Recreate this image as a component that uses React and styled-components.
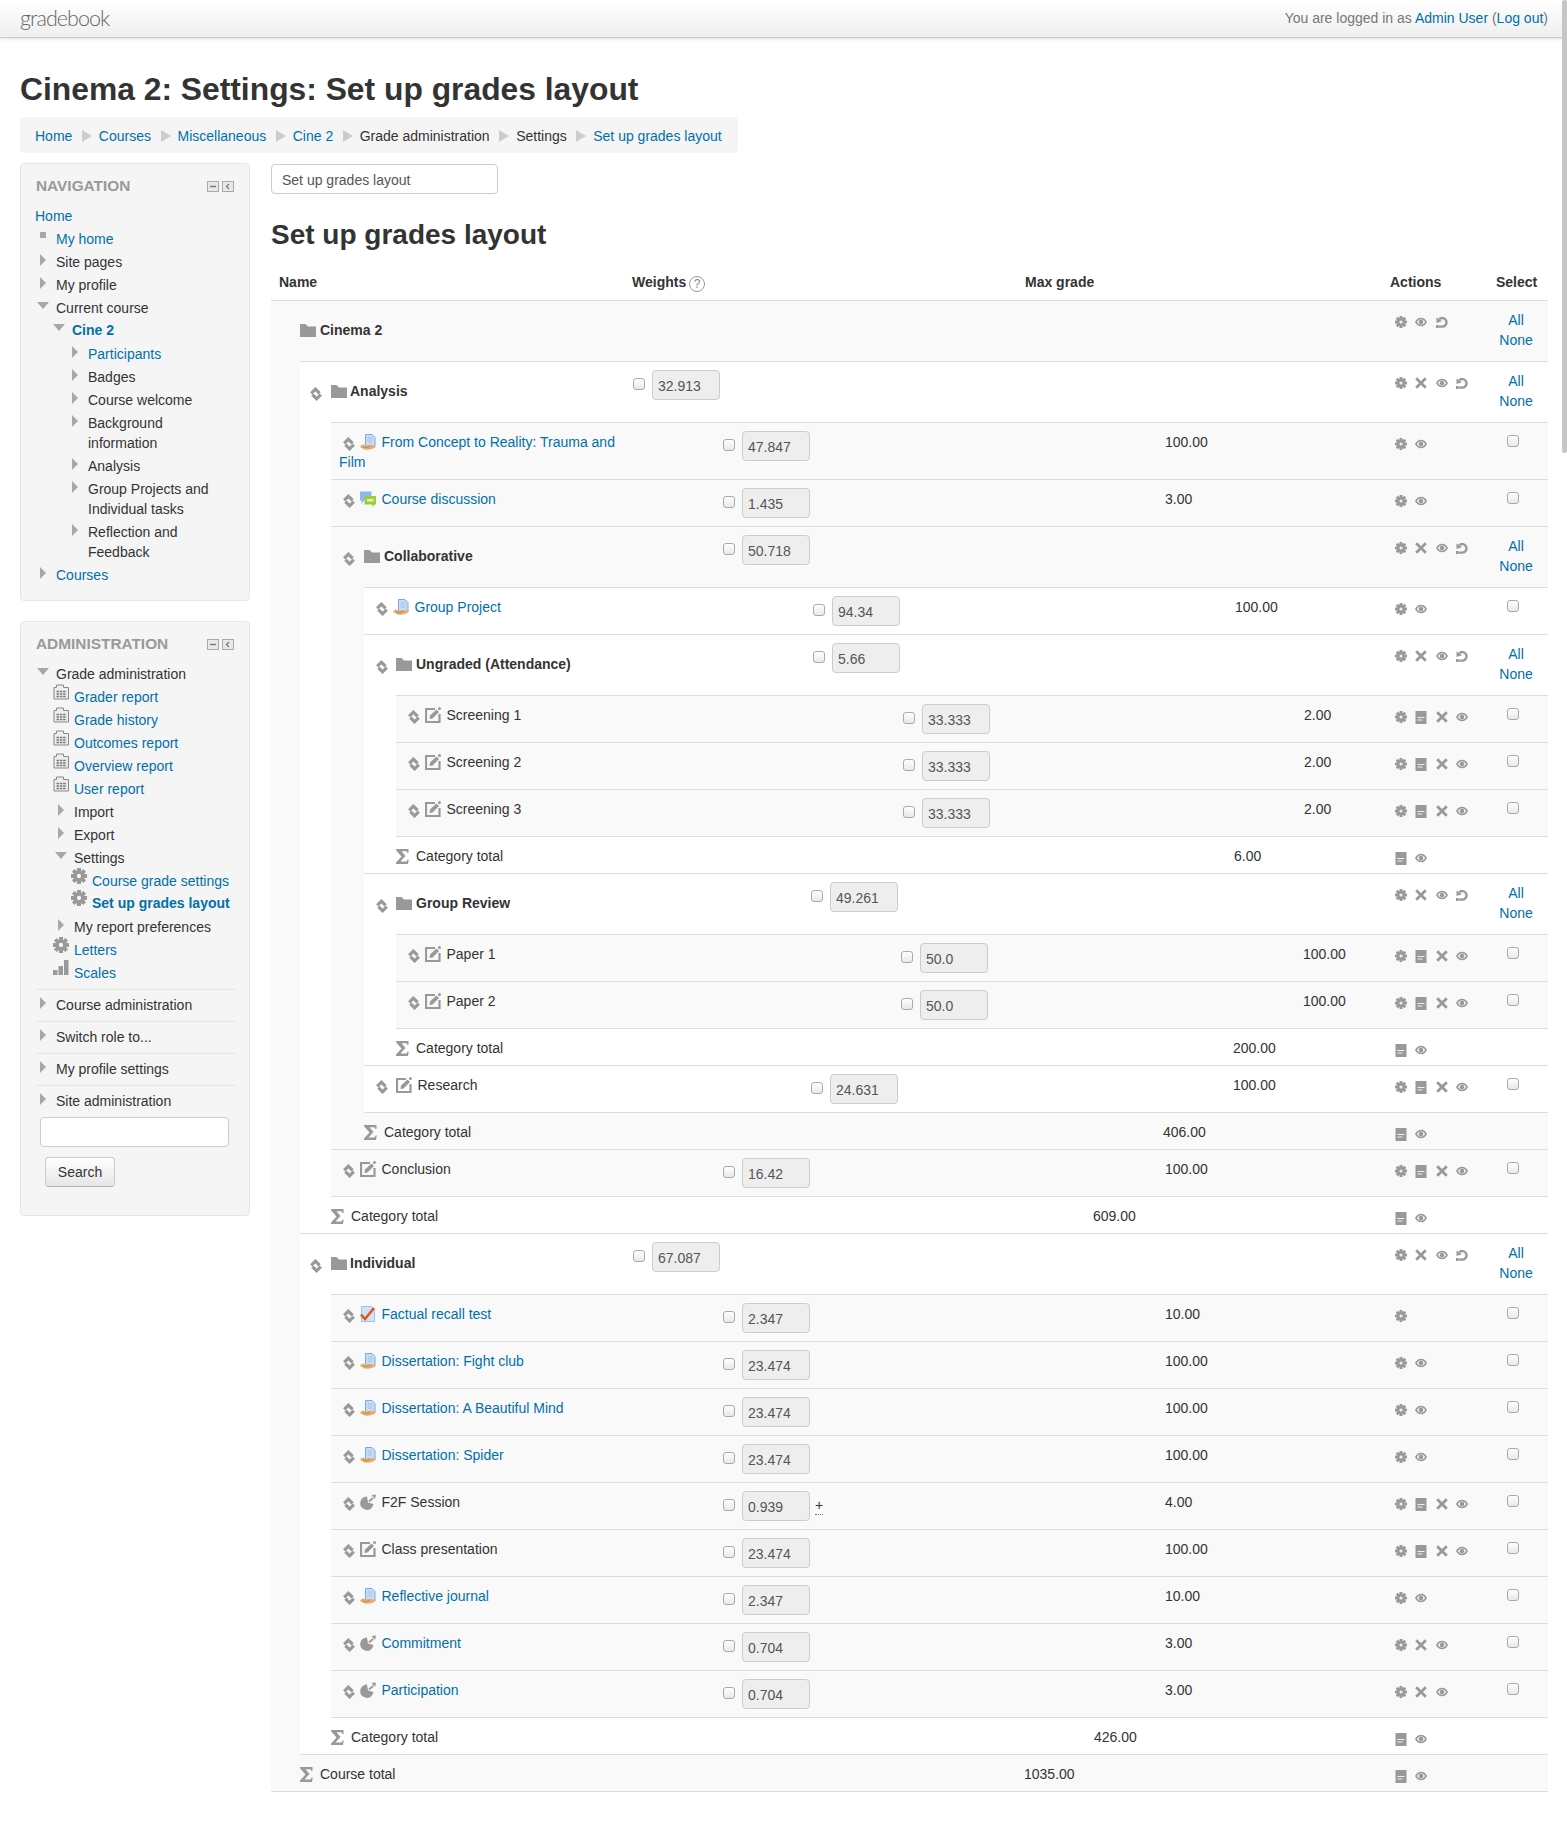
import React from "react";
import styled, { createGlobalStyle } from "styled-components";

const LINK = "#0070a8";
const ICON = "#999";
const LINE = "#ddd";

// left edge of a table row for each nesting level
const LEVEL_X = [271, 300, 331, 364, 396];
const ACTIONS_X = 1395;

const GlobalStyle = createGlobalStyle`
  html, body {
    margin: 0;
    padding: 0;
    background: #fff;
    overflow: hidden;
  }
  body {
    font-family: "Liberation Sans", Arial, sans-serif;
    font-size: 14px;
    line-height: 20px;
    color: #333;
  }
`;

const Page = styled.div`
  position: relative;
  width: 1567px;
  height: 1830px;
`;

const ScrollThumb = styled.div`
  position: absolute;
  top: 0;
  right: 0;
  width: 5px;
  height: 453px;
  border-radius: 3px;
  background: #c6c6c6;
`;

const TopBar = styled.header`
  display: flex;
  justify-content: space-between;
  align-items: center;
  box-sizing: border-box;
  height: 38px;
  padding: 0 19px 2px 20px;
  background: linear-gradient(#fff, #efefef);
  border-bottom: 1px solid #ccc;
  box-shadow: 0 1px 3px rgba(0, 0, 0, 0.12);
`;

const Logo = styled.span`
  font-family: Lato, "Liberation Sans", sans-serif;
  font-weight: 300;
  font-size: 21.5px;
  letter-spacing: -0.95px;
  color: #666;
`;

const LoginInfo = styled.div`
  color: #777;
`;

const A = styled.a`
  color: ${LINK};
  text-decoration: none;
  font-weight: ${(p) => (p.$bold ? 700 : 400)};
`;

const Content = styled.div`
  padding: 31px 19px 0 20px;
`;

const PageTitle = styled.h1`
  margin: 0 0 8px;
  font-size: 31.8px;
  line-height: 40px;
  font-weight: 700;
  color: #333;
`;

const Crumbs = styled.nav`
  display: flex;
  align-items: center;
  box-sizing: border-box;
  width: 718px;
  height: 36px;
  padding: 1px 15px 0;
  white-space: nowrap;
  background: #f5f5f5;
  border-radius: 4px;
`;

const CrumbArrow = styled.span`
  flex: none;
  width: 0;
  height: 0;
  margin: 0 6.75px 0 9.75px;
  border-top: 6px solid transparent;
  border-bottom: 6px solid transparent;
  border-left: 10px solid #ccc;
`;

const Columns = styled.div`
  display: grid;
  grid-template-columns: 230px 1277px;
  column-gap: 21px;
  margin-top: 10px;
`;

const Sidebar = styled.aside`
  display: flex;
  flex-direction: column;
  gap: 20px;
`;

const Block = styled.section`
  box-sizing: border-box;
  padding: 11px 13px ${(p) => p.$bottom}px 15px;
  background: #f5f5f5;
  border: 1px solid #e6e6e6;
  border-radius: 4px;
`;

const BlockHead = styled.div`
  display: flex;
  justify-content: space-between;
  align-items: center;
  margin-bottom: 11px;
`;

const BlockTitle = styled.h2`
  margin: 0;
  padding-top: 1px;
  height: 19px;
  font-size: 15.4px;
  line-height: 20px;
  font-weight: 700;
  text-transform: uppercase;
  color: #999;
`;

const BlockControls = styled.div`
  display: flex;
  gap: 3px;
  margin: 3px 2px 0 0;
`;

const TreeItem = styled.div`
  display: flex;
  padding-left: ${(p) => p.$indent}px;
  padding-bottom: ${(p) => (p.$bold ? 4 : 3)}px;
  margin-top: ${(p) => (p.$bold ? -1 : 0)}px;
`;

const HomeLink = styled(A)`
  margin-left: -1px;
`;

const Marker = styled.span`
  flex: none;
  width: 20px;
  height: 20px;
`;

const TriangleRight = styled.span`
  display: block;
  width: 0;
  height: 0;
  margin: 2px 0 0 4px;
  border-top: 6px solid transparent;
  border-bottom: 6px solid transparent;
  border-left: 6px solid #a8a8a8;
`;

const TriangleDown = styled.span`
  display: block;
  width: 0;
  height: 0;
  margin: 4px 0 0 1px;
  border-left: 6px solid transparent;
  border-right: 6px solid transparent;
  border-top: 7px solid #a8a8a8;
`;

const Square = styled.span`
  display: block;
  width: 6px;
  height: 6px;
  margin: 3px 0 0 4px;
  background: #a8a8a8;
`;

const MarkerIcon = styled.span`
  display: block;
  margin: -3px 0 0 -1px;
  height: 16px;
`;

const Label = styled.span`
  font-weight: ${(p) => (p.$bold ? 700 : 400)};
`;

const SectionItem = styled.div`
  display: flex;
  padding: 5px 0 6px;
  border-top: 1px solid #e6e6e6;
`;

const SectionList = styled.div`
  margin-top: 3px;
`;

const SearchBox = styled.input`
  display: block;
  box-sizing: border-box;
  width: 189px;
  height: 30px;
  margin: 0 0 0 4px;
  background: #fff;
  border: 1px solid #ccc;
  border-radius: 4px;
`;

const SearchButton = styled.button`
  display: block;
  box-sizing: border-box;
  width: 70px;
  height: 30px;
  margin: 10px 0 0 9px;
  padding: 0;
  font: inherit;
  color: #333;
  background: linear-gradient(#fff, #e6e6e6);
  border: 1px solid #ccc;
  border-bottom-color: #b3b3b3;
  border-radius: 4px;
`;

const Main = styled.main`
  padding-top: 1px;
`;

const JumpBox = styled.div`
  box-sizing: border-box;
  width: 227px;
  height: 30px;
  padding: 5px 10px 3px;
  color: #555;
  background: #fff;
  border: 1px solid #ccc;
  border-radius: 4px;
`;

const Heading = styled.h2`
  margin: 21px 0 0;
  font-size: 28px;
  line-height: 40px;
  font-weight: 700;
  color: #333;
`;

const HeadRow = styled.div`
  display: grid;
  grid-template-columns: 361px 393px 365px 106px 52px;
  padding: 17px 0 8px;
  font-weight: 700;
`;

const HeadName = styled.div`
  padding-left: 8px;
`;

const Help = styled.span`
  display: inline-block;
  width: 14px;
  height: 14px;
  margin-left: 3px;
  font-size: 12px;
  line-height: 14px;
  font-weight: 400;
  text-align: center;
  color: #888;
  border: 1.5px solid #999;
  border-radius: 50%;
  vertical-align: -1px;
`;

const Tree = styled.div`
  border-bottom: 1px solid ${LINE};
`;

const levelBg = (level) => (level % 2 === 0 ? "#f9f9f9" : "#fff");

const CategoryBox = styled.div`
  background: ${(p) => levelBg(p.$level)};
`;

const Children = styled.div`
  padding-left: ${(p) => p.$indent}px;
`;

const Row = styled.div`
  display: flex;
  border-top: 1px solid ${LINE};
  background: ${(p) => (p.$level === undefined ? "transparent" : levelBg(p.$level))};
`;

const NameCell = styled.div`
  flex: none;
  box-sizing: border-box;
  width: ${(p) => p.$w}px;
  padding: ${(p) => (p.$category ? "19px 0 0" : "9px 0 7px")};
  padding-left: ${(p) => p.$left}px;
  font-weight: ${(p) => (p.$category ? 700 : 400)};
`;

const Wrapped = styled.div`
  width: 290px;
`;

const WeightCell = styled.div`
  flex: none;
  display: flex;
  align-items: flex-start;
  box-sizing: border-box;
  width: ${(p) => p.$w}px;
  padding: 8px 0;
`;

const Check = styled.input.attrs({ type: "checkbox" })`
  appearance: none;
  flex: none;
  box-sizing: border-box;
  width: 12px;
  height: 12px;
  margin: 0;
  background: linear-gradient(#fff, #e8e8e8);
  border: 1px solid #aaa;
  border-radius: 3px;
`;

const WeightCheck = styled(Check)`
  margin: 8px 7px 0 0;
`;

const WeightInput = styled.input`
  box-sizing: border-box;
  width: 68px;
  height: 30px;
  padding: 6px 5px 4px;
  font: inherit;
  color: #555;
  background: #eee;
  border: 1px solid #ccc;
  border-radius: 4px;
`;

const Override = styled.span`
  margin: 6px 0 0 5px;
  height: 17px;
  line-height: 17px;
  color: #333;
  border-bottom: 1px dotted #777;
`;

const GradeCell = styled.div`
  flex: none;
  box-sizing: border-box;
  width: ${(p) => p.$w}px;
  padding-top: 9px;
`;

const ActionsCell = styled.div`
  flex: none;
  display: flex;
  align-items: flex-start;
  gap: 8.4px;
  box-sizing: border-box;
  width: 89px;
  padding-top: 15px;
`;

const SelectCell = styled.div`
  flex: none;
  box-sizing: border-box;
  width: 64px;
  padding: 9px 0 11px;
  text-align: center;
`;

const SelectCheck = styled(Check)`
  display: block;
  margin: 3px 0 0 23px;
`;

const InlineIcon = styled.svg`
  margin-left: ${(p) => p.$ml || 0}px;
  margin-right: ${(p) => p.$mr || 0}px;
  vertical-align: ${(p) => p.$va}px;
`;

const MoveIcon = (p) => (
  <InlineIcon width="12" height="14" viewBox="0 0 12 14" {...p}>
    <path d="M1.200 6.400 5.400 2.200l4.200 4.200" fill="none" stroke={ICON} strokeWidth="3.200" />
    <path d="M2.400 7.600l4.200 4.200 4.200-4.200" fill="none" stroke={ICON} strokeWidth="3.200" />
  </InlineIcon>
);

const FolderIcon = (p) => (
  <InlineIcon width="16" height="14" viewBox="0 0 16 14" {...p}>
    <path d="M0 1h5.500l2.500 2.500h8V14H0z" fill={ICON} />
  </InlineIcon>
);

const AssignIcon = (p) => (
  <InlineIcon width="16" height="16" viewBox="0 0 16 16" {...p}>
    <path d="M5.500.5h6.500l3 3v9.500h-9.500z" fill="#c6dcf6" stroke="#7fa9dd" />
    <path d="M7.500 4h5M7.500 6h5M7.500 8h5" stroke="#9fc0e8" strokeWidth=".8" />
    <path d="M0 13c.5-1.500 2-2.500 3.500-2.500l2 1 4-.5c2 0 4.500.5 6 1-.5 1.500-2.500 3-6 3.500-3 .5-5 0-5 0z" fill="#e6ad73" />
    <path d="M3 13c2 1 5 .5 7-1" fill="none" stroke="#b97b42" strokeWidth=".8" />
  </InlineIcon>
);

const ForumIcon = (p) => (
  <InlineIcon width="16" height="16" viewBox="0 0 16 16" {...p}>
    <path d="M0 .5h11.500v9H4L1.500 13v-3.500H0z" fill="#8cb8ee" />
    <path d="M4.500 5h11.500v8.500h-2v2.500l-2.500-2.500h-7z" fill="#9ccb3c" />
    <rect x="7" y="8" width="6.500" height="2.500" fill="#e3f2b4" />
  </InlineIcon>
);

const QuizIcon = (p) => (
  <InlineIcon width="16" height="16" viewBox="0 0 16 16" {...p}>
    <path d="M1.500.5h10l3 3v12h-13z" fill="#cfe2f7" stroke="#9cc0e6" />
    <path d="M1 8.500l4 4.500L14 2" fill="none" stroke="#e0571e" strokeWidth="2.600" />
  </InlineIcon>
);

const EditIcon = (p) => (
  <InlineIcon width="16" height="16" viewBox="0 0 16 16" {...p}>
    <path d="M10 2H1v13h13.500V7" fill="none" stroke={ICON} strokeWidth="2.200" />
    <path d="M5 8.500 11.500 2.500 14 5l-6.500 6.500-3 .5z" fill={ICON} />
    <circle cx="14.500" cy="1.500" r="1.500" fill={ICON} />
  </InlineIcon>
);

const PieIcon = (p) => (
  <InlineIcon width="16" height="16" viewBox="0 0 16 16" {...p}>
    <path d="M7 2.500a6.700 6.700 0 1 0 6.500 7.500L8 8.500z" fill={ICON} />
    <path d="M9 7.500 13 4" fill="none" stroke={ICON} strokeWidth="1.800" />
    <path d="M11.500 1 16 0.500l-1 4.500z" fill={ICON} />
  </InlineIcon>
);

const SigmaIcon = (p) => (
  <InlineIcon width="13" height="15" viewBox="0 0 13 15" {...p}>
    <path d="M0 0h12.500v4h-1L10.500 2.300H5.500l4 4.700-5 5.500h6l1.200-2h1L12 15H0v-1.500l5.500-6L0 1.200z" fill={ICON} />
  </InlineIcon>
);

const ActionSvg = styled.svg`
  flex: none;
  display: block;
`;

const GearIcon = () => (
  <ActionSvg width="12" height="12" viewBox="0 0 12 12">
    {[0, 45, 90, 135].map((a) => (
      <rect key={a} x="4.500" y="0" width="3" height="12" fill={ICON} transform={`rotate(${a} 6 6)`} />
    ))}
    <circle cx="6" cy="6" r="4.200" fill={ICON} />
    <circle cx="6" cy="6" r="1.600" fill="#eee" />
  </ActionSvg>
);

const EyeIcon = () => (
  <ActionSvg width="12" height="12" viewBox="0 0 12 12">
    <path d="M0 6c1.500-3 3.500-4.200 6-4.200S10.500 3 12 6c-1.500 3-3.500 4.200-6 4.200S1.500 9 0 6z" fill={ICON} />
    <path d="M1.800 6C3 4.200 4.300 3.300 6 3.300S9 4.200 10.200 6C9 7.800 7.700 8.700 6 8.700S3 7.800 1.800 6z" fill="#ececec" />
    <circle cx="6" cy="6" r="2.200" fill={ICON} />
  </ActionSvg>
);

const CrossIcon = () => (
  <ActionSvg width="12" height="12" viewBox="0 0 12 12">
    <path d="M1.200 1.200l9.600 9.600M10.800 1.200l-9.600 9.600" stroke={ICON} strokeWidth="2.800" />
  </ActionSvg>
);

const ResetIcon = () => (
  <ActionSvg width="12" height="12" viewBox="0 0 12 12">
    <path d="M3.200 3.200A4.300 4.300 0 1 1 6.500 10.600H2.500" fill="none" stroke={ICON} strokeWidth="2.400" />
    <path d="M0.500 1.500v5.500l5.500-1.700z" fill={ICON} />
    <path d="M0 9h2.500v3H0z" fill={ICON} />
  </ActionSvg>
);

const DocIcon = () => (
  <ActionSvg width="12" height="13" viewBox="0 0 12 13">
    <rect x="0.500" y="0" width="11" height="13" fill={ICON} />
    <path d="M2.500 6.500h7M2.500 9h5" stroke="#eee" strokeWidth="1" />
  </ActionSvg>
);

const ReportIcon = () => (
  <svg width="16" height="16" viewBox="0 0 16 16">
    <path d="M1 15V3.500h2.500V1h7v2.500H15.500V15z" fill="#eee" stroke="#888" />
    <path d="M3.500 7.500h10M3.500 10h10M3.500 12.500h10" stroke="#777" strokeWidth="1.300" strokeDasharray="2.500 .8" />
  </svg>
);

const SideGear = () => (
  <svg width="16" height="16" viewBox="0 0 12 12">
    {[0, 45, 90, 135].map((a) => (
      <rect key={a} x="4.500" y="0" width="3" height="12" fill={ICON} transform={`rotate(${a} 6 6)`} />
    ))}
    <circle cx="6" cy="6" r="4.200" fill={ICON} />
    <circle cx="6" cy="6" r="1.600" fill="#f5f5f5" />
  </svg>
);

const ScalesIcon = () => (
  <svg width="16" height="16" viewBox="0 0 16 16">
    <path d="M0 10h4.500v5H0zM5.500 6h4.500v9H5.500zM11 0h4.500v15H11z" fill={ICON} />
  </svg>
);

const CollapseIcon = () => (
  <svg width="12" height="11" viewBox="0 0 12 11">
    <rect x="0.500" y="0.500" width="11" height="10" fill="#e8e8e8" stroke="#aaa" />
    <path d="M3 5.500h6" stroke="#777" strokeWidth="1.400" />
  </svg>
);

const DockIcon = () => (
  <svg width="12" height="11" viewBox="0 0 12 11">
    <rect x="0.500" y="0.500" width="11" height="10" fill="#e8e8e8" stroke="#aaa" />
    <path d="M7 3 4.500 5.500 7 8" fill="none" stroke="#777" strokeWidth="1.200" />
  </svg>
);

const ACTION = { gear: GearIcon, eye: EyeIcon, x: CrossIcon, reset: ResetIcon, doc: DocIcon };
const ACTIVITY = { assign: AssignIcon, forum: ForumIcon, quiz: QuizIcon, edit: EditIcon, pie: PieIcon };

const CAT_ACTIONS = ["gear", "x", "eye", "reset"];
const MANUAL_ACTIONS = ["gear", "doc", "x", "eye"];
const MOD_ACTIONS = ["gear", "eye"];

const total = (g, v) => ({ kind: "total", name: "Category total", g, v });
const leaf = (name, icon, w, weight, g, v, actions, extra) => ({
  kind: "leaf",
  name,
  icon,
  w,
  weight,
  g,
  v,
  actions,
  ...extra,
});

const TREE = {
  kind: "cat",
  name: "Cinema 2",
  actions: ["gear", "eye", "reset"],
  children: [
    {
      kind: "cat",
      name: "Analysis",
      w: 633,
      weight: "32.913",
      actions: CAT_ACTIONS,
      children: [
        leaf("From Concept to Reality: Trauma and Film", "assign", 723, "47.847", 1165, "100.00", MOD_ACTIONS, { link: true, wrap: true }),
        leaf("Course discussion", "forum", 723, "1.435", 1165, "3.00", MOD_ACTIONS, { link: true }),
        {
          kind: "cat",
          name: "Collaborative",
          w: 723,
          weight: "50.718",
          actions: CAT_ACTIONS,
          children: [
            leaf("Group Project", "assign", 813, "94.34", 1235, "100.00", MOD_ACTIONS, { link: true }),
            {
              kind: "cat",
              name: "Ungraded (Attendance)",
              w: 813,
              weight: "5.66",
              actions: CAT_ACTIONS,
              children: [
                leaf("Screening 1", "edit", 903, "33.333", 1304, "2.00", MANUAL_ACTIONS),
                leaf("Screening 2", "edit", 903, "33.333", 1304, "2.00", MANUAL_ACTIONS),
                leaf("Screening 3", "edit", 903, "33.333", 1304, "2.00", MANUAL_ACTIONS),
                total(1234, "6.00"),
              ],
            },
            {
              kind: "cat",
              name: "Group Review",
              w: 811,
              weight: "49.261",
              actions: CAT_ACTIONS,
              children: [
                leaf("Paper 1", "edit", 901, "50.0", 1303, "100.00", MANUAL_ACTIONS),
                leaf("Paper 2", "edit", 901, "50.0", 1303, "100.00", MANUAL_ACTIONS),
                total(1233, "200.00"),
              ],
            },
            leaf("Research", "edit", 811, "24.631", 1233, "100.00", MANUAL_ACTIONS, { nudge: 3 }),
            total(1163, "406.00"),
          ],
        },
        leaf("Conclusion", "edit", 723, "16.42", 1165, "100.00", MANUAL_ACTIONS),
        total(1093, "609.00"),
      ],
    },
    {
      kind: "cat",
      name: "Individual",
      w: 633,
      weight: "67.087",
      actions: CAT_ACTIONS,
      children: [
        leaf("Factual recall test", "quiz", 723, "2.347", 1165, "10.00", ["gear"], { link: true }),
        leaf("Dissertation: Fight club", "assign", 723, "23.474", 1165, "100.00", MOD_ACTIONS, { link: true }),
        leaf("Dissertation: A Beautiful Mind", "assign", 723, "23.474", 1165, "100.00", MOD_ACTIONS, { link: true }),
        leaf("Dissertation: Spider", "assign", 723, "23.474", 1165, "100.00", MOD_ACTIONS, { link: true }),
        leaf("F2F Session", "pie", 723, "0.939", 1165, "4.00", MANUAL_ACTIONS, { override: true }),
        leaf("Class presentation", "edit", 723, "23.474", 1165, "100.00", MANUAL_ACTIONS),
        leaf("Reflective journal", "assign", 723, "2.347", 1165, "10.00", MOD_ACTIONS, { link: true }),
        leaf("Commitment", "pie", 723, "0.704", 1165, "3.00", ["gear", "x", "eye"], { link: true }),
        leaf("Participation", "pie", 723, "0.704", 1165, "3.00", ["gear", "x", "eye"], { link: true }),
        total(1094, "426.00"),
      ],
    },
    { kind: "total", name: "Course total", g: 1024, v: "1035.00" },
  ],
};

const Actions = ({ list }) => (
  <ActionsCell>
    {list.map((a) => {
      const Icon = ACTION[a];
      return <Icon key={a} />;
    })}
  </ActionsCell>
);

const Weight = ({ node, width }) => (
  <WeightCell $w={width}>
    <WeightCheck readOnly />
    <WeightInput readOnly value={node.weight} />
    {node.override && <Override>+</Override>}
  </WeightCell>
);

const CategoryRows = ({ node, level }) => {
  const x = LEVEL_X[level];
  const nextX = LEVEL_X[level + 1];
  const moveLeft = level === 1 ? 10 : 12;
  return (
    <CategoryBox $level={level}>
      <Row>
        <NameCell $category $w={(node.w || ACTIONS_X) - x} $left={level === 0 ? nextX - x : moveLeft}>
          {level > 0 && <MoveIcon $va={-5} $mr={nextX - x - moveLeft - 12} />}
          <FolderIcon $va={-2} $mr={level === 1 ? 3 : 4} />
          {node.name}
        </NameCell>
        {node.w && <Weight node={node} width={ACTIONS_X - node.w} />}
        <Actions list={node.actions} />
        <SelectCell>
          <div><A href="#">All</A></div>
          <div><A href="#">None</A></div>
        </SelectCell>
      </Row>
      <Children $indent={nextX - x}>
        {node.children.map((child) => (
          <GradeNode key={child.name + child.v} node={child} level={level + 1} />
        ))}
      </Children>
    </CategoryBox>
  );
};

const LeafRow = ({ node, level }) => {
  const x = LEVEL_X[level];
  const Icon = ACTIVITY[node.icon];
  const text = node.link ? <A href="#">{node.name}</A> : node.name;
  const inner = (
    <>
      <MoveIcon $ml={4} $mr={5 + (node.nudge || 0)} $va={-4} />
      <Icon $mr={5.5} $va={-3} />
      {text}
    </>
  );
  return (
    <Row $level={level}>
      <NameCell $w={node.w - x} $left={8}>
        {node.wrap ? <Wrapped>{inner}</Wrapped> : inner}
      </NameCell>
      <Weight node={node} width={node.g - node.w} />
      <GradeCell $w={ACTIONS_X - node.g}>{node.v}</GradeCell>
      <Actions list={node.actions} />
      <SelectCell>
        <SelectCheck readOnly />
      </SelectCell>
    </Row>
  );
};

const TotalRow = ({ node, level }) => (
  <Row>
    <NameCell $w={node.g - LEVEL_X[level]} $left={0}>
      <SigmaIcon $mr={7} $va={-3} />
      {node.name}
    </NameCell>
    <GradeCell $w={ACTIONS_X - node.g}>{node.v}</GradeCell>
    <Actions list={["doc", "eye"]} />
  </Row>
);

const GradeNode = ({ node, level }) => {
  if (node.kind === "cat") return <CategoryRows node={node} level={level} />;
  if (node.kind === "total") return <TotalRow node={node} level={level} />;
  return <LeafRow node={node} level={level} />;
};

const NAV_ITEMS = [
  { t: "My home", d: 0, m: "square", link: true },
  { t: "Site pages", d: 0, m: "right" },
  { t: "My profile", d: 0, m: "right" },
  { t: "Current course", d: 0, m: "down" },
  { t: "Cine 2", d: 1, m: "down", link: true, bold: true },
  { t: "Participants", d: 2, m: "right", link: true },
  { t: "Badges", d: 2, m: "right" },
  { t: "Course welcome", d: 2, m: "right" },
  { t: "Background information", d: 2, m: "right", narrow: true },
  { t: "Analysis", d: 2, m: "right" },
  { t: "Group Projects and Individual tasks", d: 2, m: "right", narrow: true },
  { t: "Reflection and Feedback", d: 2, m: "right", narrow: true },
  { t: "Courses", d: 0, m: "right", link: true },
];

const ADMIN_ITEMS = [
  { t: "Grade administration", d: 0, m: "down" },
  { t: "Grader report", d: 1, m: "report", link: true },
  { t: "Grade history", d: 1, m: "report", link: true },
  { t: "Outcomes report", d: 1, m: "report", link: true },
  { t: "Overview report", d: 1, m: "report", link: true },
  { t: "User report", d: 1, m: "report", link: true },
  { t: "Import", d: 1, m: "right" },
  { t: "Export", d: 1, m: "right" },
  { t: "Settings", d: 1, m: "down" },
  { t: "Course grade settings", d: 2, m: "gear", link: true },
  { t: "Set up grades layout", d: 2, m: "gear", link: true, bold: true },
  { t: "My report preferences", d: 1, m: "right" },
  { t: "Letters", d: 1, m: "gear", link: true },
  { t: "Scales", d: 1, m: "scales", link: true },
];

const SECTIONS = ["Course administration", "Switch role to...", "My profile settings", "Site administration"];

const MarkerShape = ({ type }) => {
  if (type === "right") return <TriangleRight />;
  if (type === "down") return <TriangleDown />;
  if (type === "square") return <Square />;
  if (type === "report") return <MarkerIcon><ReportIcon /></MarkerIcon>;
  if (type === "gear") return <MarkerIcon><SideGear /></MarkerIcon>;
  return <MarkerIcon><ScalesIcon /></MarkerIcon>;
};

const SideLabel = styled.span`
  max-width: ${(p) => (p.$narrow ? "132px" : "none")};
`;

const TreeList = ({ items, step }) =>
  items.map((item) => (
    <TreeItem key={item.t} $indent={item.d * step} $bold={item.bold}>
      <Marker>
        <MarkerShape type={item.m} />
      </Marker>
      <SideLabel $narrow={item.narrow}>
        {item.link ? <A href="#" $bold={item.bold}>{item.t}</A> : <Label $bold={item.bold}>{item.t}</Label>}
      </SideLabel>
    </TreeItem>
  ));

const CRUMBS = [
  { t: "Home", link: true },
  { t: "Courses", link: true },
  { t: "Miscellaneous", link: true },
  { t: "Cine 2", link: true },
  { t: "Grade administration" },
  { t: "Settings" },
  { t: "Set up grades layout", link: true },
];

const App = () => (
  <Page>
    <GlobalStyle />
    <TopBar>
      <Logo>gradebook</Logo>
      <LoginInfo>
        You are logged in as <A href="#">Admin User</A> (<A href="#">Log out</A>)
      </LoginInfo>
    </TopBar>
    <Content>
      <PageTitle>Cinema 2: Settings: Set up grades layout</PageTitle>
      <Crumbs>
        {CRUMBS.map((c, i) => (
          <React.Fragment key={c.t}>
            {i > 0 && <CrumbArrow />}
            {c.link ? <A href="#">{c.t}</A> : <span>{c.t}</span>}
          </React.Fragment>
        ))}
      </Crumbs>
      <Columns>
        <Sidebar>
          <Block $bottom={12}>
            <BlockHead>
              <BlockTitle>Navigation</BlockTitle>
              <BlockControls><CollapseIcon /><DockIcon /></BlockControls>
            </BlockHead>
            <TreeItem $indent={0}><HomeLink href="#">Home</HomeLink></TreeItem>
            <TreeList items={NAV_ITEMS} step={16} />
          </Block>
          <Block $bottom={28}>
            <BlockHead>
              <BlockTitle>Administration</BlockTitle>
              <BlockControls><CollapseIcon /><DockIcon /></BlockControls>
            </BlockHead>
            <TreeList items={ADMIN_ITEMS} step={18} />
            <SectionList>
              {SECTIONS.map((s) => (
                <SectionItem key={s}>
                  <Marker><TriangleRight /></Marker>
                  {s}
                </SectionItem>
              ))}
            </SectionList>
            <SearchBox />
            <SearchButton>Search</SearchButton>
          </Block>
        </Sidebar>
        <Main>
          <JumpBox>Set up grades layout</JumpBox>
          <Heading>Set up grades layout</Heading>
          <HeadRow>
            <HeadName>Name</HeadName>
            <div>Weights<Help>?</Help></div>
            <div>Max grade</div>
            <div>Actions</div>
            <div>Select</div>
          </HeadRow>
          <Tree>
            <GradeNode node={TREE} level={0} />
          </Tree>
        </Main>
      </Columns>
    </Content>
    <ScrollThumb />
  </Page>
);

export default App;
